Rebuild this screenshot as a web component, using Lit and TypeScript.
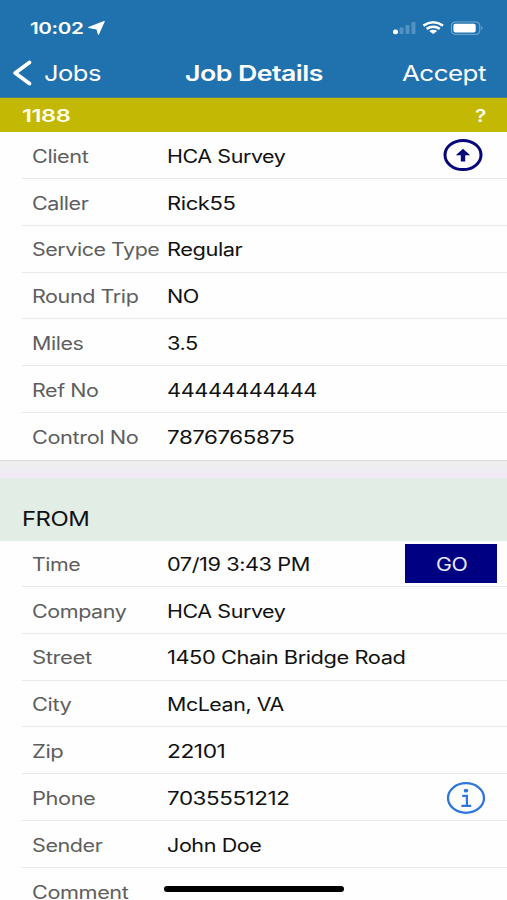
import { LitElement, html, css, svg, nothing } from "lit";
import { customElement, property } from "lit/decorators.js";

interface Field {
  label: string;
  value: string;
  width: number;
  labelWidth: number;
  action?: "up" | "go" | "info";
}

const JOB: Field[] = [
  { label: "Client", labelWidth: 56, value: "HCA Survey", width: 118, action: "up" },
  { label: "Caller", labelWidth: 56, value: "Rick55", width: 68 },
  { label: "Service Type", labelWidth: 127, value: "Regular", width: 75 },
  { label: "Round Trip", labelWidth: 106, value: "NO", width: 31.5 },
  { label: "Miles", labelWidth: 51, value: "3.5", width: 30.5 },
  { label: "Ref No", labelWidth: 66, value: "44444444444", width: 149.5 },
  { label: "Control No", labelWidth: 106, value: "7876765875", width: 127 },
];

const FROM: Field[] = [
  { label: "Time", labelWidth: 48, value: "07/19 3:43 PM", width: 142.5, action: "go" },
  { label: "Company", labelWidth: 94, value: "HCA Survey", width: 118 },
  { label: "Street", labelWidth: 59.5, value: "1450 Chain Bridge Road", width: 238 },
  { label: "City", labelWidth: 39, value: "McLean, VA", width: 116.5 },
  { label: "Zip", labelWidth: 31, value: "22101", width: 58 },
  { label: "Phone", labelWidth: 63, value: "7035551212", width: 122, action: "info" },
  { label: "Sender", labelWidth: 70, value: "John Doe", width: 94 },
  { label: "Comment", labelWidth: 96, value: "", width: 0 },
];

/** A run of text widened horizontally to a given width. */
@customElement("wide-text")
export class WideText extends LitElement {
  @property() text = "";
  @property({ type: Number }) width = 0;

  static styles = css`
    :host { display: block; white-space: nowrap; line-height: 1; letter-spacing: -0.02em; }
    .run { display: inline-block; transform-origin: left center; }
  `;

  render() {
    return html`<span class="run">${this.text}</span>`;
  }

  updated() {
    const run = this.renderRoot.querySelector<HTMLElement>(".run")!;
    const fit = () => {
      run.style.transform = "none";
      const natural = run.getBoundingClientRect().width;
      if (natural > 0 && this.width > 0) {
        run.style.transform = `scaleX(${(this.width + 0.4) / natural})`;
        this.style.width = `${this.width + 0.4}px`;
      }
    };
    fit();
    document.fonts.ready.then(fit);
  }
}

const wide = (text: string, width: number, cls = "") =>
  html`<wide-text class=${cls} .text=${text} .width=${width}></wide-text>`;

@customElement("job-fields")
export class JobFields extends LitElement {
  @property({ attribute: false }) fields: Field[] = [];

  static styles = css`
    :host { display: block; font-size: 18px; }
    .row {
      display: grid;
      grid-template-columns: 135px 1fr auto;
      align-items: center;
      box-sizing: border-box;
      height: 46.87px;
      margin-left: 22px;
      padding: 1px 0 0 10.3px;
      border-bottom: 1px solid #e9e9eb;
    }
    .row:last-child { border-bottom-color: transparent; }
    .label, .value { padding-top: 2.6px; line-height: 16px; }
    .label { color: #5e5e60; }
    .value { color: #111; }
    .up { display: block; margin: 0 24px 0 0; }
    .info { display: block; margin-right: 21px; }
    .go {
      display: flex;
      align-items: center;
      justify-content: center;
      box-sizing: border-box;
      width: 91.5px;
      height: 38.5px;
      margin: 0 10.3px 0 0;
      padding: 3px 0 0;
      border: 0;
      border-radius: 0;
      background: #000083;
      color: #e9e9f6;
      font: inherit;
      font-size: 18px;
    }
    .go wide-text { margin-right: 3px; }
  `;

  private action(kind?: string) {
    if (kind === "go") return html`<button class="go">${wide("GO", 31)}</button>`;
    if (kind === "up")
      return svg`<svg class="up" width="40" height="34" viewBox="0 0 40 34">
        <ellipse cx="20" cy="17" rx="18" ry="14.6" fill="none" stroke="#07077c" stroke-width="3"/>
        <path d="M20 10.8 L27.2 17.2 H22.2 V23.6 H17.8 V17.2 H12.8 Z" fill="#07077c"/>
      </svg>`;
    if (kind === "info")
      return svg`<svg class="info" width="40" height="34" viewBox="0 0 40 34">
        <ellipse cx="20" cy="17" rx="18" ry="14.8" fill="none" stroke="#2d77dc" stroke-width="2.3"/>
        <ellipse cx="20" cy="9.7" rx="2.3" ry="1.9" fill="#2d77dc"/>
        <path d="M16.2 14.9 H20.9 V24.6 M15.4 24.8 H25.2" fill="none" stroke="#2d77dc" stroke-width="2.2"/>
      </svg>`;
    return nothing;
  }

  render() {
    return this.fields.map(
      (f) => html`<div class="row">
        ${wide(f.label, f.labelWidth, "label")}
        ${wide(f.value, f.width, "value")}
        ${this.action(f.action)}
      </div>`
    );
  }
}

@customElement("app-root")
export class AppRoot extends LitElement {
  static styles = css`
    :host {
      display: block;
      position: relative;
      width: 507px;
      height: 900px;
      overflow: hidden;
      background: #fefefe;
      font-family: Inter, "Liberation Sans", sans-serif;
    }
    .top {
      box-sizing: border-box;
      height: 98px;
      background: #1f72ae;
      color: #fff;
      border-bottom: 1px solid #4b7d83;
    }
    .status {
      display: flex;
      align-items: center;
      height: 48px;
      padding: 7px 23px 0 30px;
      box-sizing: border-box;
      font-size: 16.5px;
      font-weight: 600;
    }
    .time { padding-top: 1px; }
    .arrow { margin-left: 4.6px; }
    .system { margin-left: auto; }
    .nav {
      display: grid;
      grid-template-columns: 184.7px 1fr auto;
      align-items: center;
      height: 50px;
      padding-right: 21px;
      font-size: 21.5px;
    }
    .nav wide-text { padding-top: 2px; }
    .back { display: flex; align-items: center; gap: 11px; padding-left: 12px; }
    .title { font-weight: 600; }
    .number {
      display: flex;
      align-items: center;
      justify-content: space-between;
      box-sizing: border-box;
      height: 34px;
      padding: 1px 21px 0 22px;
      background: #c3b803;
      color: #fffef0;
      font-size: 17.5px;
      font-weight: 600;
    }
    .gap {
      box-sizing: border-box;
      height: 18px;
      border-top: 1px solid #dededf;
      background: linear-gradient(#eeeef1 45%, #f1e9f5 85%);
    }
    .section {
      display: flex;
      align-items: flex-end;
      box-sizing: border-box;
      height: 63px;
      padding: 0 0 12px 21.5px;
      background: #e2ede5;
      color: #111;
      font-size: 20px;
    }
    .job { height: 328px; }
    .from { margin-top: -1px; }
    .home {
      position: absolute;
      left: 164px;
      top: 886px;
      width: 180px;
      height: 5.5px;
      border-radius: 3px;
      background: #000;
    }
  `;

  render() {
    return html`
      <header class="top">
        <div class="status">
          ${wide("10:02", 53, "time")}
          <svg class="arrow" width="17" height="14" viewBox="0 0 17 14">
            <path d="M16.2 .5 L10.4 13.2 L8.9 7.9 L.7 6.5 Z" fill="#fff" stroke="#fff" stroke-width="1.1" stroke-linejoin="round"/>
          </svg>
          <svg class="system" width="92" height="16" viewBox="0 0 92 16">
            <g fill="#fff">
              <rect x="1" y="9.4" width="5" height="4.8" rx="2"/>
              <g fill-opacity=".24">
                <rect x="7.5" y="7.6" width="4" height="6.4" rx="1"/>
                <rect x="13.5" y="4.9" width="4" height="9.1" rx="1"/>
                <rect x="19.5" y="2" width="4" height="12" rx="1"/>
              </g>
              <path d="M37.2 10.9 Q41.2 8.6 45.2 10.9 L41.2 14 Z"/>
              <rect x="61.4" y="3.7" width="22.3" height="8.8" rx="2"/>
              <path d="M89.5 6 Q91.4 8 89.5 10 Z" fill-opacity=".5"/>
            </g>
            <path d="M31.4 5.6 Q41.2 -1.2 51 5.6 M34.6 8.9 Q41.2 4.4 47.8 8.9" fill="none" stroke="#fff" stroke-width="2.5"/>
            <rect x="59.4" y="2" width="28.4" height="12.4" rx="3.6" fill="none" stroke="#fff" stroke-opacity=".4"/>
          </svg>
        </div>
        <nav class="nav">
          <div class="back">
            <svg width="21" height="26" viewBox="0 0 21 26">
              <path d="M17.4 2.4 L3.2 13 L17.4 23.6" fill="none" stroke="#fff" stroke-width="3.8" stroke-linecap="round" stroke-linejoin="round"/>
            </svg>
            ${wide("Jobs", 56.5)}
          </div>
          ${wide("Job Details", 137.5, "title")}
          ${wide("Accept", 83.5)}
        </nav>
      </header>
      <div class="number">${wide("1188", 48)} ${wide("?", 10.5)}</div>
      <job-fields class="job" .fields=${JOB}></job-fields>
      <div class="gap"></div>
      <div class="section">${wide("FROM", 67)}</div>
      <job-fields class="from" .fields=${FROM}></job-fields>
      <div class="home"></div>
    `;
  }
}
